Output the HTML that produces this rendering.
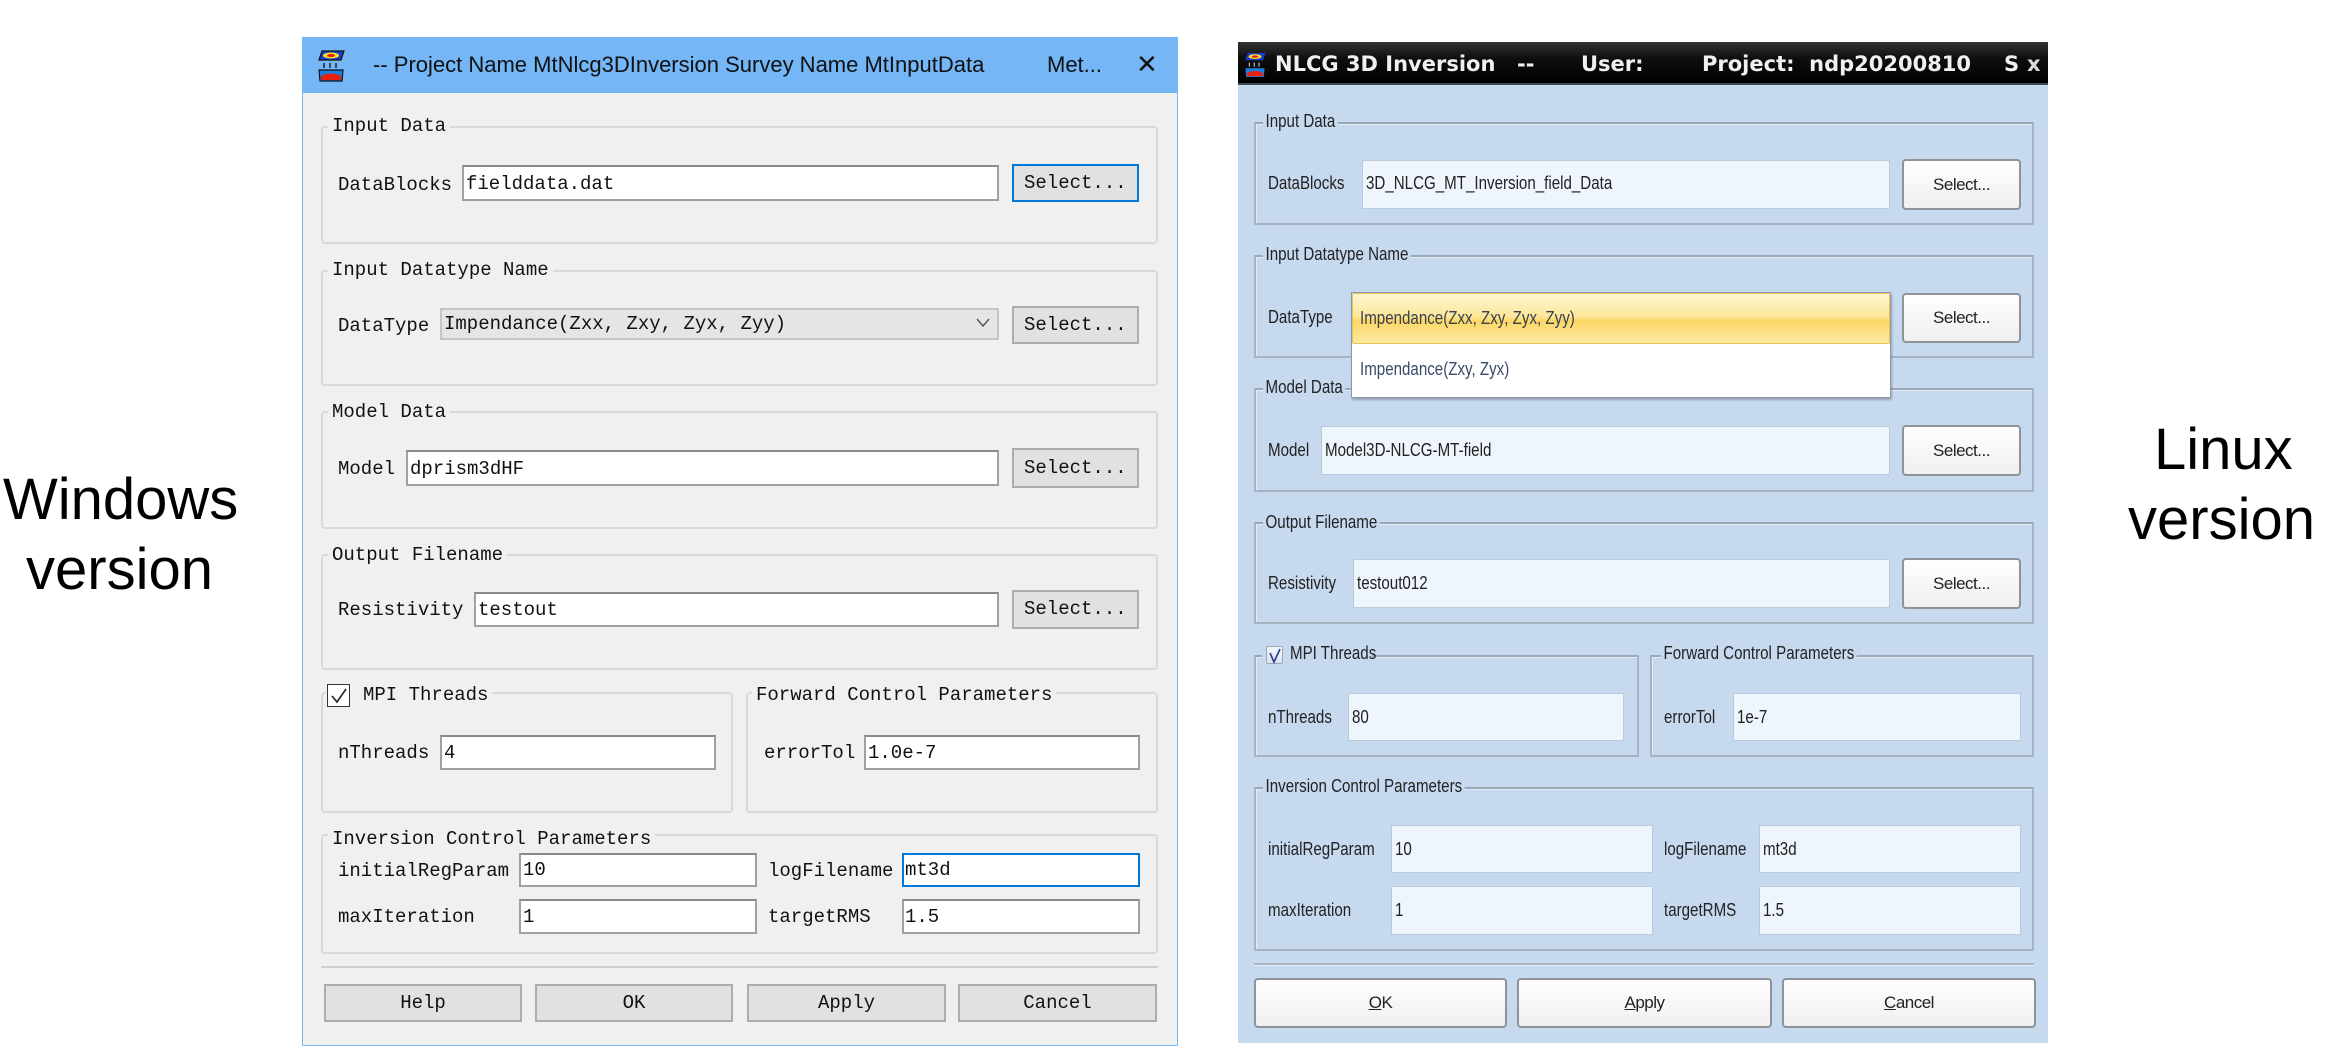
<!DOCTYPE html>
<html><head><meta charset="utf-8"><style>
*{margin:0;padding:0;box-sizing:border-box}
body{width:2336px;height:1064px;background:#fff;position:relative;overflow:hidden;font-family:"Liberation Sans",sans-serif}
div,span{position:absolute}
.side{font-size:58px;color:#000;line-height:58px;white-space:nowrap}
.w{font-family:"Liberation Mono",monospace;font-size:19px;color:#111;white-space:nowrap;line-height:24px}
.wg{border:2px solid #d9d9d9;border-radius:4px}
.wgt{background:#f0f0f0;padding:0 4px}
.wi{background:#fff;border:2px solid #a0a0a0;border-top-color:#8a8a8a}
.wb{background:#e1e1e1;border:2px solid #adadad;text-align:center}
.l{font-family:"Liberation Sans Narrow","Liberation Sans",sans-serif;font-size:18px;color:#222;white-space:nowrap;line-height:22px;transform:scaleX(.84);transform-origin:0 0}
.lg{border:2px solid #a6b3c2;border-top-color:#9aa8b8;box-shadow:inset 1px 1px 0 #e4edf7}
.lgt{background:#c7d9ee;padding:0 3px}
.li{background:#eef5fd;border:1px solid #b9cadc}
.lb{background:linear-gradient(#ffffff,#efefef);border:2px solid #8d9399;border-radius:4px;text-align:center;font-size:17px;color:#222;letter-spacing:-0.5px}
</style></head><body>

<div class="side" style="left:3px;top:471px">Windows</div>
<div class="side" style="left:26px;top:541px">version</div>
<div class="side" style="left:2154px;top:421px">Linux</div>
<div class="side" style="left:2128px;top:491px">version</div>

<!-- WINDOWS DIALOG -->
<div style="left:302px;top:37px;width:876px;height:1009px;background:#f0f0f0;border:1px solid #7ab6ef"></div>
<div style="left:302px;top:37px;width:876px;height:56px;background:#74b6f6"></div>
<svg style="position:absolute;left:316px;top:49px" width="30" height="34" viewBox="0 0 30 34">
<path d="M6 2 L28 2 L25 11 L3 11 Z" fill="#1a3fd0" stroke="#111" stroke-width="1.2"/>
<ellipse cx="15" cy="6.5" rx="8" ry="3" fill="#f8e020"/><ellipse cx="15" cy="6.5" rx="4" ry="1.6" fill="#e82010"/>
<path d="M8 14 v5 M14 14 v5 M20 14 v5" stroke="#222" stroke-width="1.5"/>
<path d="M3 21 L27 21 L26 32 L4 32 Z" fill="#1a7de0" stroke="#111" stroke-width="1.2"/>
<path d="M5 27 Q15 22 25 27 L25 31 L5 31 Z" fill="#e82010"/>
</svg>
<div style="left:373px;top:50px;font-size:22px;line-height:30px;color:#111;white-space:nowrap">-- Project Name MtNlcg3DInversion Survey Name MtInputData</div>
<div style="left:1047px;top:50px;font-size:22px;line-height:30px;color:#111">Met...</div>
<div style="left:1136px;top:48px;font-size:26px;line-height:32px;color:#111">✕</div>

<div class="wg" style="left:321px;top:126px;width:837px;height:118px"></div>
<div class="w wgt" style="left:328px;top:114px">Input Data</div>
<div class="w" style="left:338px;top:173px">DataBlocks</div>
<div class="wi" style="left:462px;top:165px;width:537px;height:36px"></div>
<div class="w" style="left:466px;top:172px">fielddata.dat</div>
<div class="wb" style="left:1012px;top:164px;width:127px;height:38px;border-color:#0078d7"></div>
<div class="w" style="left:1024px;top:171px">Select...</div>

<div class="wg" style="left:321px;top:270px;width:837px;height:116px"></div>
<div class="w wgt" style="left:328px;top:258px">Input Datatype Name</div>
<div class="w" style="left:338px;top:314px">DataType</div>
<div style="left:440px;top:308px;width:559px;height:32px;background:#e5e5e5;border:2px solid #c6c6c6"></div>
<div class="w" style="left:444px;top:312px">Impendance(Zxx, Zxy, Zyx, Zyy)</div>
<svg style="position:absolute;left:976px;top:318px" width="14" height="10"><path d="M1 1 L7 8 L13 1" fill="none" stroke="#555" stroke-width="1.4"/></svg>
<div class="wb" style="left:1012px;top:306px;width:127px;height:38px"></div>
<div class="w" style="left:1024px;top:313px">Select...</div>

<div class="wg" style="left:321px;top:411px;width:837px;height:118px"></div>
<div class="w wgt" style="left:328px;top:400px">Model Data</div>
<div class="w" style="left:338px;top:457px">Model</div>
<div class="wi" style="left:406px;top:450px;width:593px;height:36px"></div>
<div class="w" style="left:410px;top:457px">dprism3dHF</div>
<div class="wb" style="left:1012px;top:448px;width:127px;height:40px"></div>
<div class="w" style="left:1024px;top:456px">Select...</div>

<div class="wg" style="left:321px;top:554px;width:837px;height:116px"></div>
<div class="w wgt" style="left:328px;top:543px">Output Filename</div>
<div class="w" style="left:338px;top:598px">Resistivity</div>
<div class="wi" style="left:474px;top:592px;width:525px;height:35px"></div>
<div class="w" style="left:478px;top:598px">testout</div>
<div class="wb" style="left:1012px;top:590px;width:127px;height:39px"></div>
<div class="w" style="left:1024px;top:597px">Select...</div>

<div class="wg" style="left:321px;top:692px;width:412px;height:121px"></div>
<div style="left:326px;top:683px;width:36px;height:26px;background:#f0f0f0"></div>
<div style="left:327px;top:684px;width:23px;height:23px;background:#fff;border:1px solid #333"></div>
<svg style="position:absolute;left:329px;top:686px" width="20" height="20"><path d="M3 10 L8 16 L17 3" fill="none" stroke="#222" stroke-width="1.6"/></svg>
<div class="w wgt" style="left:359px;top:683px">MPI Threads</div>
<div class="w" style="left:338px;top:741px">nThreads</div>
<div class="wi" style="left:440px;top:735px;width:276px;height:35px"></div>
<div class="w" style="left:444px;top:741px">4</div>

<div class="wg" style="left:746px;top:692px;width:412px;height:121px"></div>
<div class="w wgt" style="left:752px;top:683px">Forward Control Parameters</div>
<div class="w" style="left:764px;top:741px">errorTol</div>
<div class="wi" style="left:864px;top:735px;width:276px;height:35px"></div>
<div class="w" style="left:868px;top:741px">1.0e-7</div>

<div class="wg" style="left:321px;top:834px;width:837px;height:120px"></div>
<div class="w wgt" style="left:328px;top:827px">Inversion Control Parameters</div>
<div class="w" style="left:338px;top:859px">initialRegParam</div>
<div class="wi" style="left:519px;top:853px;width:238px;height:34px"></div>
<div class="w" style="left:523px;top:858px">10</div>
<div class="w" style="left:768px;top:859px">logFilename</div>
<div class="wi" style="left:902px;top:853px;width:238px;height:34px;border-color:#0078d7"></div>
<div class="w" style="left:905px;top:858px">mt3d</div>
<div class="w" style="left:338px;top:905px">maxIteration</div>
<div class="wi" style="left:519px;top:899px;width:238px;height:35px"></div>
<div class="w" style="left:523px;top:905px">1</div>
<div class="w" style="left:768px;top:905px">targetRMS</div>
<div class="wi" style="left:902px;top:899px;width:238px;height:35px"></div>
<div class="w" style="left:905px;top:905px">1.5</div>

<div style="left:321px;top:966px;width:837px;height:2px;background:#cfcfcf"></div>
<div class="wb w" style="left:324px;top:984px;width:198px;height:38px;line-height:34px">Help</div>
<div class="wb w" style="left:535px;top:984px;width:198px;height:38px;line-height:34px">OK</div>
<div class="wb w" style="left:747px;top:984px;width:199px;height:38px;line-height:34px">Apply</div>
<div class="wb w" style="left:958px;top:984px;width:199px;height:38px;line-height:34px">Cancel</div>

<!-- LINUX DIALOG -->
<div style="left:1238px;top:42px;width:810px;height:1001px;background:#c7d9ee"></div>
<div style="left:1238px;top:42px;width:810px;height:43px;background:linear-gradient(#333,#0e0e0e 40%,#000);border-bottom:2px solid #3a4a5a"></div>
<svg style="position:absolute;left:1243px;top:51px" width="24" height="28" viewBox="0 0 30 34">
<path d="M6 2 L28 2 L25 11 L3 11 Z" fill="#1a3fd0"/>
<ellipse cx="15" cy="6.5" rx="8" ry="3" fill="#f8e020"/><ellipse cx="15" cy="6.5" rx="4" ry="1.6" fill="#e82010"/>
<path d="M8 14 v5 M14 14 v5 M20 14 v5" stroke="#bbb" stroke-width="1.5"/>
<path d="M3 21 L27 21 L26 32 L4 32 Z" fill="#1a7de0"/>
<path d="M5 27 Q15 22 25 27 L25 31 L5 31 Z" fill="#e82010"/>
</svg>
<div style="left:1275px;top:50px;font-family:'DejaVu Sans',sans-serif;font-weight:bold;font-size:21px;line-height:28px;color:#f0f0f0;white-space:nowrap">NLCG 3D Inversion</div>
<div style="left:1517px;top:50px;font-family:'DejaVu Sans',sans-serif;font-weight:bold;font-size:21px;line-height:28px;color:#f0f0f0">--</div>
<div style="left:1581px;top:50px;font-family:'DejaVu Sans',sans-serif;font-weight:bold;font-size:21px;line-height:28px;color:#f0f0f0">User:</div>
<div style="left:1702px;top:50px;font-family:'DejaVu Sans',sans-serif;font-weight:bold;font-size:21px;line-height:28px;color:#f0f0f0;white-space:nowrap">Project:&nbsp; ndp20200810</div>
<div style="left:2004px;top:50px;font-family:'DejaVu Sans',sans-serif;font-weight:bold;font-size:21px;line-height:28px;color:#f0f0f0">S</div>
<div style="left:2027px;top:50px;font-family:'DejaVu Sans',sans-serif;font-weight:bold;font-size:21px;line-height:28px;color:#ddd">x</div>

<div class="lg" style="left:1254px;top:122px;width:780px;height:103px"></div>
<div class="l lgt" style="left:1263px;top:110px">Input Data</div>
<div class="l" style="left:1268px;top:172px">DataBlocks</div>
<div class="li" style="left:1362px;top:160px;width:528px;height:49px"></div>
<div class="l" style="left:1366px;top:172px">3D_NLCG_MT_Inversion_field_Data</div>
<div class="lb" style="left:1902px;top:159px;width:119px;height:51px;line-height:47px">Select...</div>

<div class="lg" style="left:1254px;top:255px;width:780px;height:103px"></div>
<div class="l lgt" style="left:1263px;top:243px">Input Datatype Name</div>
<div class="l" style="left:1268px;top:306px">DataType</div>
<div class="lb" style="left:1902px;top:293px;width:119px;height:50px;line-height:46px">Select...</div>

<div class="lg" style="left:1254px;top:388px;width:780px;height:104px"></div>
<div class="l lgt" style="left:1263px;top:376px">Model Data</div>
<div class="l" style="left:1268px;top:439px">Model</div>
<div class="li" style="left:1321px;top:426px;width:569px;height:49px"></div>
<div class="l" style="left:1325px;top:439px">Model3D-NLCG-MT-field</div>
<div class="lb" style="left:1902px;top:425px;width:119px;height:51px;line-height:47px">Select...</div>

<div style="left:1351px;top:292px;width:540px;height:106px;background:#fff;border:1px solid #8a9aaa;box-shadow:1px 2px 2px rgba(0,0,0,.25)"></div>
<div style="left:1352px;top:293px;width:538px;height:51px;background:linear-gradient(#fdf6d2,#fce79a 45%,#fbd764 55%,#fde9a4);border:1px solid #e8c458;border-radius:2px"></div>
<div class="l" style="left:1360px;top:307px;color:#3a4050">Impendance(Zxx, Zxy, Zyx, Zyy)</div>
<div class="l" style="left:1360px;top:358px;color:#3a4a6a">Impendance(Zxy, Zyx)</div>

<div class="lg" style="left:1254px;top:522px;width:780px;height:102px"></div>
<div class="l lgt" style="left:1263px;top:511px">Output Filename</div>
<div class="l" style="left:1268px;top:572px">Resistivity</div>
<div class="li" style="left:1353px;top:559px;width:537px;height:49px"></div>
<div class="l" style="left:1357px;top:572px">testout012</div>
<div class="lb" style="left:1902px;top:558px;width:119px;height:51px;line-height:47px">Select...</div>

<div class="lg" style="left:1254px;top:655px;width:385px;height:102px"></div>
<div style="left:1262px;top:644px;width:110px;height:22px;background:#c7d9ee"></div>
<div style="left:1266px;top:646px;width:17px;height:18px;background:linear-gradient(#f4f8fc,#d8e2ee);border:1px solid #9aa8b8;border-radius:2px"></div>
<svg style="position:absolute;left:1267px;top:647px" width="16" height="17"><path d="M3 6 L7 15 L13 2" fill="none" stroke="#2a3a8a" stroke-width="1.6"/></svg>
<div class="l" style="left:1290px;top:642px">MPI Threads</div>
<div class="l" style="left:1268px;top:706px">nThreads</div>
<div class="li" style="left:1348px;top:693px;width:276px;height:48px"></div>
<div class="l" style="left:1352px;top:706px">80</div>

<div class="lg" style="left:1650px;top:655px;width:384px;height:102px"></div>
<div class="l lgt" style="left:1661px;top:642px">Forward Control Parameters</div>
<div class="l" style="left:1664px;top:706px">errorTol</div>
<div class="li" style="left:1733px;top:693px;width:288px;height:48px"></div>
<div class="l" style="left:1737px;top:706px">1e-7</div>

<div class="lg" style="left:1254px;top:787px;width:780px;height:164px"></div>
<div class="l lgt" style="left:1263px;top:775px">Inversion Control Parameters</div>
<div class="l" style="left:1268px;top:838px">initialRegParam</div>
<div class="li" style="left:1391px;top:825px;width:262px;height:48px"></div>
<div class="l" style="left:1395px;top:838px">10</div>
<div class="l" style="left:1664px;top:838px">logFilename</div>
<div class="li" style="left:1759px;top:825px;width:262px;height:48px"></div>
<div class="l" style="left:1763px;top:838px">mt3d</div>
<div class="l" style="left:1268px;top:899px">maxIteration</div>
<div class="li" style="left:1391px;top:886px;width:262px;height:49px"></div>
<div class="l" style="left:1395px;top:899px">1</div>
<div class="l" style="left:1664px;top:899px">targetRMS</div>
<div class="li" style="left:1759px;top:886px;width:262px;height:49px"></div>
<div class="l" style="left:1763px;top:899px">1.5</div>

<div style="left:1254px;top:963px;width:780px;height:3px;background:#a8b4c2;border-bottom:1px solid #e6eef8"></div>
<div class="lb" style="left:1254px;top:978px;width:253px;height:50px;line-height:46px"><u>O</u>K</div>
<div class="lb" style="left:1517px;top:978px;width:255px;height:50px;line-height:46px"><u>A</u>pply</div>
<div class="lb" style="left:1782px;top:978px;width:254px;height:50px;line-height:46px"><u>C</u>ancel</div>
</body></html>
